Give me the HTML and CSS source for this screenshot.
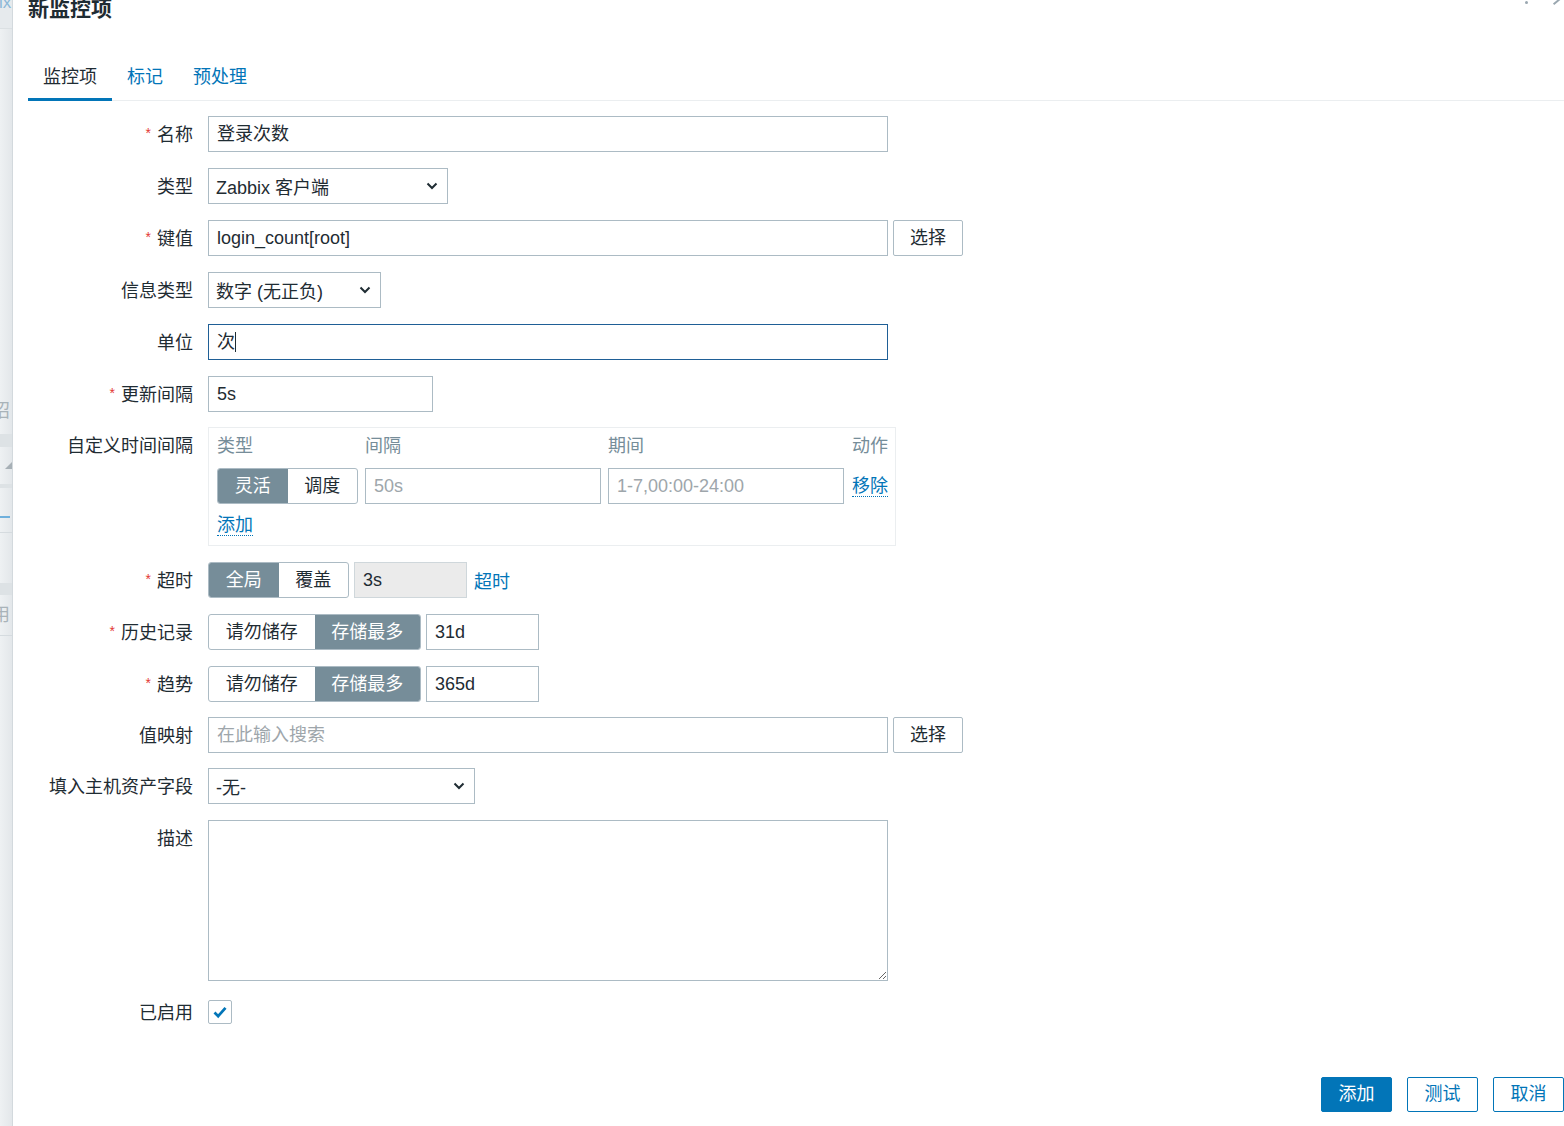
FILE: index.html
```html
<!DOCTYPE html>
<html lang="zh-CN">
<head>
<meta charset="utf-8">
<title>新监控项</title>
<link rel="stylesheet" href="styles.css">
</head>
<body>
<div class="page">
  <aside class="backdrop">
    <div class="bd-top"><span class="bd-logo">ix</span></div>
    <div class="bd-frag bd-f1">诏</div>
    <div class="bd-band bd-b1"></div>
    <div class="bd-tri"></div>
    <div class="bd-band bd-b2"></div>
    <div class="bd-blue"></div>
    <div class="bd-line bd-l1"></div>
    <div class="bd-band bd-b3"></div>
    <div class="bd-frag bd-f2">用</div>
    <div class="bd-line bd-l2"></div>
  </aside>

  <div class="dialog">
    <header class="dlg-head">
      <h2 class="dlg-title">新监控项</h2>
      <div class="head-icons">
        <span class="hi-dot"></span>
        <span class="hi-x"></span>
      </div>
    </header>

    <ul class="tabs">
      <li class="tab active">监控项</li>
      <li class="tab">标记</li>
      <li class="tab">预处理</li>
    </ul>

    <div class="form">
      <div class="label"><span class="req">*</span>名称</div>
      <div class="field"><div class="input w680">登录次数</div></div>

      <div class="label">类型</div>
      <div class="field">
        <div class="select w240"><span>Zabbix 客户端</span><svg class="chev" viewBox="0 0 12 8" width="12" height="8"><path d="M1.5 1.5 L6 6 L10.5 1.5" fill="none" stroke="#1f2c33" stroke-width="2"/></svg></div>
      </div>

      <div class="label"><span class="req">*</span>键值</div>
      <div class="field row">
        <div class="input w680">login_count[root]</div>
        <div class="btn-grey">选择</div>
      </div>

      <div class="label">信息类型</div>
      <div class="field">
        <div class="select w173"><span>数字 (无正负)</span><svg class="chev" viewBox="0 0 12 8" width="12" height="8"><path d="M1.5 1.5 L6 6 L10.5 1.5" fill="none" stroke="#1f2c33" stroke-width="2"/></svg></div>
      </div>

      <div class="label">单位</div>
      <div class="field"><div class="input w680 focus">次<span class="caret"></span></div></div>

      <div class="label"><span class="req">*</span>更新间隔</div>
      <div class="field"><div class="input w225">5s</div></div>

      <div class="label up1">自定义时间间隔</div>
      <div class="field up1">
        <div class="intervals">
          <div class="iv-head">类型</div>
          <div class="iv-head">间隔</div>
          <div class="iv-head">期间</div>
          <div class="iv-head iv-right">动作</div>

          <div class="seg seg-iv">
            <span class="seg-item on">灵活</span><span class="seg-item">调度</span>
          </div>
          <div class="input ph">50s</div>
          <div class="input ph">1-7,00:00-24:00</div>
          <div class="iv-right"><span class="link dotted">移除</span></div>

          <div class="iv-add"><span class="link dotted">添加</span></div>
        </div>
      </div>

      <div class="label"><span class="req">*</span>超时</div>
      <div class="field row">
        <div class="seg seg-to">
          <span class="seg-item on">全局</span><span class="seg-item">覆盖</span>
        </div>
        <div class="input disabled w113">3s</div>
        <span class="link plain">超时</span>
      </div>

      <div class="label"><span class="req">*</span>历史记录</div>
      <div class="field row">
        <div class="seg seg-hist">
          <span class="seg-item">请勿储存</span><span class="seg-item on">存储最多</span>
        </div>
        <div class="input w113">31d</div>
      </div>

      <div class="label"><span class="req">*</span>趋势</div>
      <div class="field row">
        <div class="seg seg-hist">
          <span class="seg-item">请勿储存</span><span class="seg-item on">存储最多</span>
        </div>
        <div class="input w113">365d</div>
      </div>

      <div class="label up1">值映射</div>
      <div class="field row up1">
        <div class="input w680 ph2">在此输入搜索</div>
        <div class="btn-grey">选择</div>
      </div>

      <div class="label up1">填入主机资产字段</div>
      <div class="field up1">
        <div class="select w267"><span>-无-</span><svg class="chev" viewBox="0 0 12 8" width="12" height="8"><path d="M1.5 1.5 L6 6 L10.5 1.5" fill="none" stroke="#1f2c33" stroke-width="2"/></svg></div>
      </div>

      <div class="label">描述</div>
      <div class="field"><textarea class="textarea"></textarea></div>

      <div class="label lbl-check">已启用</div>
      <div class="field field-check">
        <span class="checkbox"><svg viewBox="0 0 24 24" width="22" height="22"><path d="M6 12.5 L10 16.5 L18 7.5" fill="none" stroke="#0275b8" stroke-width="3"/></svg></span>
      </div>
    </div>

    <footer class="dlg-foot">
      <span class="btn primary">添加</span>
      <span class="btn alt">测试</span>
      <span class="btn alt">取消</span>
    </footer>
  </div>
</div>
</body>
</html>
```

FILE: styles.css
```css
* { box-sizing: border-box; }

html, body {
  margin: 0;
  padding: 0;
  height: 100%;
  overflow: hidden;
  background: #ffffff;
}

body {
  font-family: "Liberation Sans", Arial, "Noto Sans CJK SC", sans-serif;
  font-size: 18px;
  color: #1f2c33;
}

.page {
  display: flex;
  height: 1126px;
}

/* ---------- backdrop strip on the left ---------- */
.backdrop {
  width: 13px;
  flex: 0 0 13px;
  background: linear-gradient(to right, #eef1f3, #e3e7ea);
  border-right: 1px solid #d3d9dd;
  overflow: hidden;
  display: flex;
  flex-direction: column;
}
.bd-top {
  height: 29px;
  background: #e6eaed;
  border-bottom: 1px solid #dbe0e3;
  overflow: hidden;
}
.bd-logo {
  display: block;
  margin-top: -6px;
  margin-left: -1px;
  font-size: 17px;
  line-height: 18px;
  color: #8bb8d8;
}
.bd-frag {
  font-size: 18px;
  line-height: 20px;
  color: #a9b3b9;
  margin-left: -8px;
  white-space: nowrap;
}
.bd-f1 { margin-top: 372px; }
.bd-band { background: #dde2e5; }
.bd-b1 { height: 13px; margin-top: 13px; }
.bd-tri {
  width: 0; height: 0;
  margin-top: 15px;
  margin-left: 5px;
  border-left: 7px solid transparent;
  border-bottom: 7px solid #a7b0b6;
}
.bd-b2 { height: 4px; margin-top: 15px; }
.bd-blue { height: 2px; width: 10px; background: #6fb0dc; margin-top: 28px; }
.bd-line { height: 1px; background: #d5dbdf; }
.bd-l1 { margin-top: 14px; }
.bd-b3 { height: 12px; margin-top: 50px; }
.bd-f2 { margin-top: 10px; }
.bd-l2 { margin-top: 10px; }

/* ---------- dialog ---------- */
.dialog {
  flex: 1;
  display: flex;
  flex-direction: column;
  padding-left: 15px;
  min-width: 0;
}

.dlg-head {
  display: flex;
  align-items: flex-start;
  justify-content: space-between;
  margin-top: -4px;
  height: 26px;
}
.dlg-title {
  margin: 0;
  font-size: 21px;
  line-height: 26px;
  font-weight: bold;
  color: #1f2c33;
}
.head-icons {
  display: flex;
  align-items: flex-start;
  gap: 24px;
  padding-right: 4px;
  margin-top: 4px;
}
.hi-dot {
  width: 3px; height: 3px;
  margin-top: 1px;
  border-radius: 50%;
  background: #9aa7b0;
}
.hi-x {
  width: 8px; height: 4px;
  border-bottom: 2px solid #9aa7b0;
  transform: rotate(-40deg);
  margin-top: -1px;
}

/* tabs */
.tabs {
  list-style: none;
  margin: 35px 0 0 0;
  padding: 0;
  display: flex;
  border-bottom: 1px solid #ebeef0;
}
.tab {
  padding: 8px 15px 9px;
  line-height: 24px;
  font-size: 18px;
  color: #0275b8;
  border-bottom: 3px solid transparent;
  margin-bottom: -1px;
}
.tab.active {
  color: #1f2c33;
  border-bottom-color: #0275b8;
}

/* form grid */
.form {
  display: grid;
  grid-template-columns: 165px 1fr;
  column-gap: 15px;
  row-gap: 16px;
  margin-top: 15px;
  align-items: start;
}
.label {
  text-align: right;
  line-height: 36px;
  padding-top: 1px;
  height: 36px;
  white-space: nowrap;
}
.up1 { margin-top: -1px; }
.req {
  display: inline-block;
  color: #e33734;
  font-size: 14px;
  line-height: 14px;
  margin-right: 6px;
  position: relative;
  top: -3px;
}
.field { display: flex; min-width: 0; }
.field.row { align-items: center; gap: 5px; }

.input {
  height: 36px;
  border: 1px solid #acbbc4;
  background: #fff;
  padding: 1px 8px 0;
  line-height: 33px;
  white-space: nowrap;
  overflow: hidden;
  color: #1f2c33;
}
.w680 { width: 680px; }
.w225 { width: 225px; }
.w113 { width: 113px; }
.input.focus { border-color: #1f5f96; }
.caret {
  display: inline-block;
  width: 1px;
  height: 20px;
  background: #1f2c33;
  vertical-align: middle;
  margin-top: -3px;
}
.input.ph { color: #9ea6ab; }
.input.ph2 { color: #9ea6ab; }
.input.disabled { background: #ebebeb; border-color: #cfd7db; }

.select {
  height: 36px;
  border: 1px solid #acbbc4;
  background: #fff;
  padding: 0 8px 0 7px;
  display: flex;
  align-items: center;
  justify-content: space-between;
  white-space: nowrap;
}
.w240 { width: 240px; }
.w173 { width: 173px; }
.w267 { width: 267px; }
.chev { flex: 0 0 auto; margin-right: 1px; }

.btn-grey {
  height: 36px;
  width: 70px;
  border: 1px solid #acbbc4;
  border-radius: 2px;
  background: #fff;
  text-align: center;
  line-height: 34px;
  color: #1f2c33;
}

.link { color: #0275b8; }
.link.dotted { border-bottom: 1px dotted #0275b8; line-height: 20px; }
.link.plain { margin-left: 2px; }

/* segmented radio */
.seg {
  display: flex;
  height: 36px;
  border: 1px solid #acbbc4;
  border-radius: 3px;
  overflow: hidden;
  background: #fff;
}
.seg-item {
  flex: 1;
  text-align: center;
  line-height: 34px;
  color: #1f2c33;
  white-space: nowrap;
}
.seg-item.on {
  background: #768d99;
  color: #fff;
}
.seg-iv { width: 141px; }
.seg-to { width: 141px; }
.seg-hist { width: 213px; }

/* custom intervals box */
.intervals {
  width: 688px;
  border: 1px solid #ebeef0;
  padding: 3px 7px 7px 8px;
  display: grid;
  grid-template-columns: 141px 236px 236px 1fr;
  column-gap: 7px;
  row-gap: 7px;
  align-items: center;
}
.iv-head {
  line-height: 30px;
  color: #768d99;
}
.iv-right { text-align: right; }
.iv-add {
  grid-column: 1 / -1;
  line-height: 24px;
  padding-top: 2px;
  padding-bottom: 1px;
}

/* textarea */
.textarea {
  width: 680px;
  height: 161px;
  border: 1px solid #acbbc4;
  background: #fff;
  resize: both;
  font-family: inherit;
  font-size: 18px;
  padding: 4px 8px;
  margin: 0;
  display: block;
  outline: none;
}

/* checkbox */
.label.lbl-check { line-height: 30px; height: 30px; }
.field-check { align-items: center; height: 30px; }
.checkbox {
  width: 24px;
  height: 24px;
  border: 1px solid #acbbc4;
  border-radius: 2px;
  background: #fff;
  display: flex;
  align-items: center;
  justify-content: center;
}

/* footer */
.dlg-foot {
  margin-top: auto;
  display: flex;
  justify-content: flex-end;
  gap: 15px;
  padding-bottom: 14px;
}
.btn {
  width: 71px;
  height: 35px;
  border-radius: 2px;
  text-align: center;
  line-height: 33px;
  font-size: 18px;
  border: 1px solid #0275b8;
}
.btn.primary { background: #0275b8; color: #fff; }
.btn.alt { background: #fff; color: #0275b8; }
```
